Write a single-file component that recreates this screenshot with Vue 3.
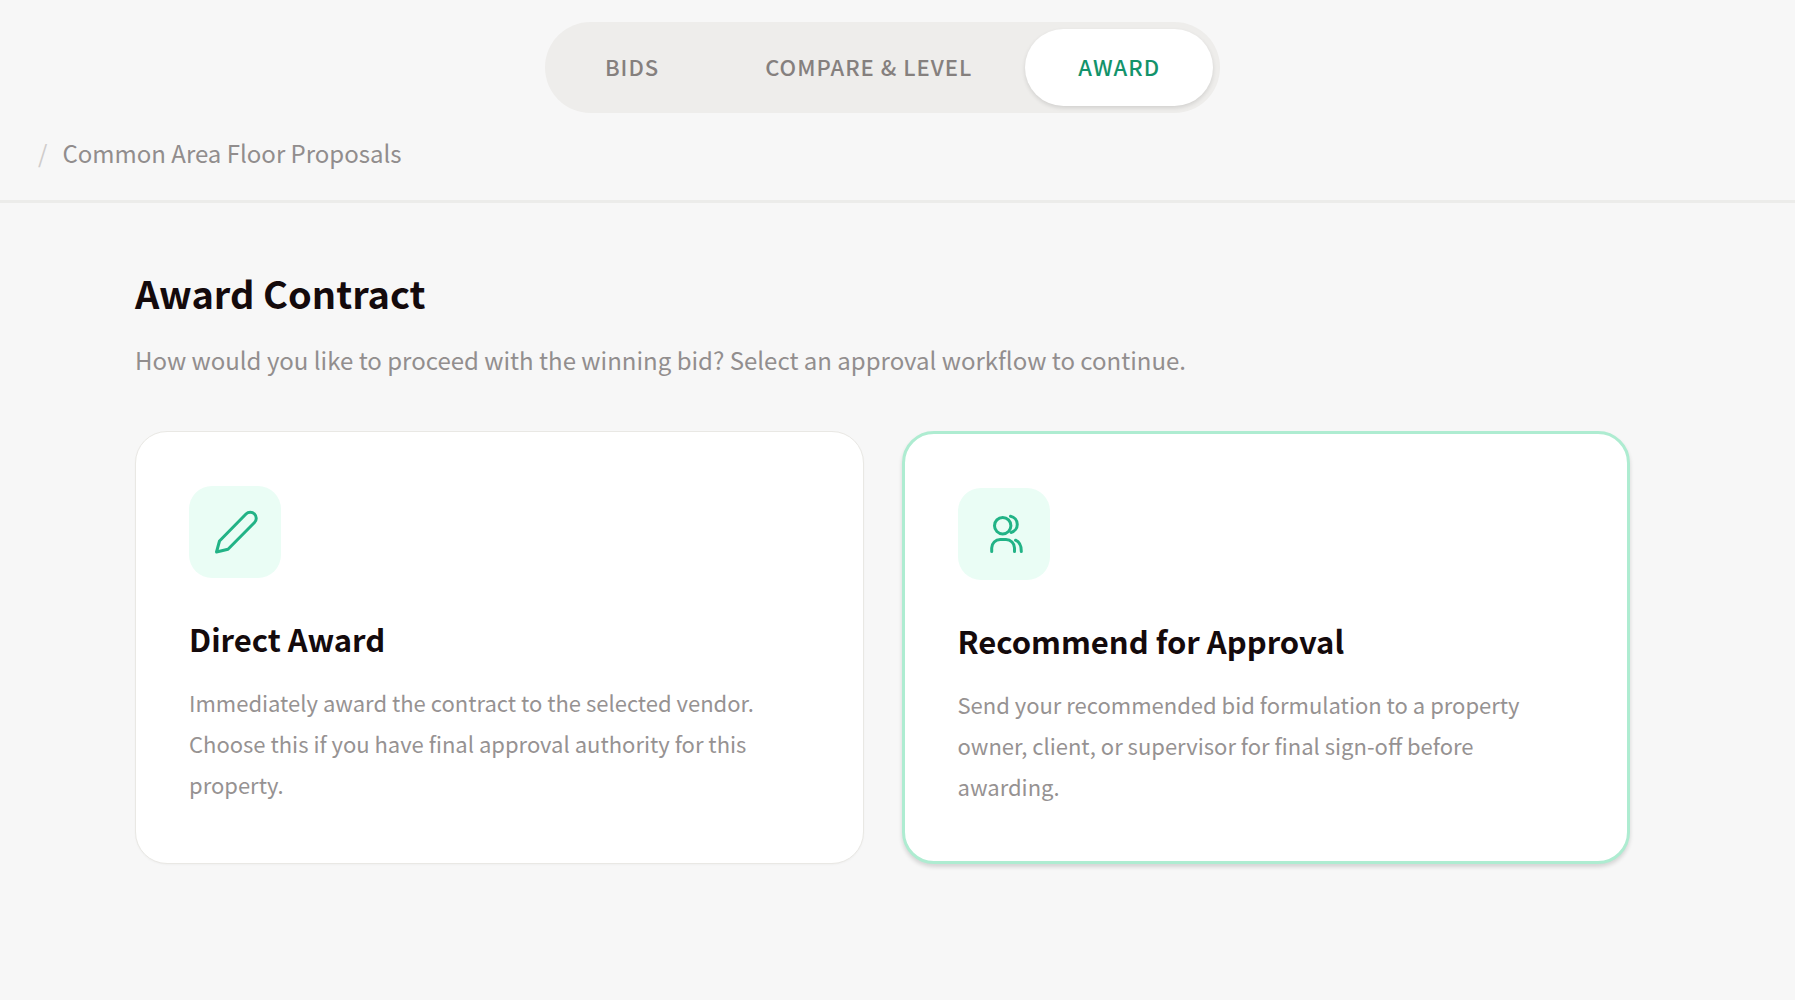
<script setup>
import { ref } from 'vue'

const tabs = ['Bids', 'Compare & Level', 'Award']
const activeTab = ref('Award')

const options = [
  {
    id: 'direct',
    title: 'Direct Award',
    text: 'Immediately award the contract to the selected vendor. Choose this if you have final approval authority for this property.',
  },
  {
    id: 'recommend',
    title: 'Recommend for Approval',
    text: 'Send your recommended bid formulation to a property owner, client, or supervisor for final sign-off before awarding.',
  },
]
const selected = ref('recommend')
</script>

<template>
  <div class="page">
    <header class="top">
      <nav class="tabs" aria-label="Bid stages">
        <button
          v-for="tab in tabs"
          :key="tab"
          type="button"
          class="tab"
          :class="{ active: tab === activeTab }"
          @click="activeTab = tab"
        >{{ tab }}</button>
      </nav>
      <div class="crumbs">
        <span class="slash">/</span>
        <span>Common Area Floor Proposals</span>
      </div>
    </header>

    <main class="content">
      <h1>Award Contract</h1>
      <p class="lead">How would you like to proceed with the winning bid? Select an approval workflow to continue.</p>
      <div class="cards">
        <button
          v-for="option in options"
          :key="option.id"
          type="button"
          class="card"
          :class="{ selected: option.id === selected }"
          :aria-pressed="option.id === selected"
          @click="selected = option.id"
        >
          <span class="badge">
            <svg v-if="option.id === 'direct'" viewBox="0 0 92 92" aria-hidden="true">
              <path d="M27.5 66L30.5 55L57 28A6 6 0 0 1 65.5 36.5L39 63.2Z" />
            </svg>
            <svg v-else viewBox="0 0 92 92" aria-hidden="true">
              <circle cx="44.7" cy="37.7" r="8.2" />
              <path d="M33.7 63.5V60A8.5 8.5 0 0 1 42.2 51.5H48A8.5 8.5 0 0 1 56.5 60V63.5" />
              <path d="M52.5 28.3A8.3 8.3 0 0 1 53 44.5" />
              <path d="M57.5 52.2Q63.3 54.5 63.3 63.5" />
            </svg>
          </span>
          <span class="title">{{ option.title }}</span>
          <span class="text">{{ option.text }}</span>
        </button>
      </div>
    </main>
  </div>
</template>

<style>
body {
  margin: 0;
  background: #f7f7f7;
}
</style>

<style scoped>
.page {
  min-height: 100vh;
  background: #f7f7f7;
  color: #140a0c;
  font-family: "Noto Sans CJK SC", "Noto Sans", sans-serif;
  font-size: 24px;
}

button {
  margin: 0;
  border: 0;
  font-family: inherit;
  cursor: pointer;
}

.top {
  padding: 22px 30px 0 0;
  border-bottom: 3px solid #ececea;
}

.tabs {
  display: flex;
  width: fit-content;
  margin: 0 auto;
  padding: 7px;
  border-radius: 46px;
  background: #eeedeb;
}

.tab {
  padding: 0 53px 2px;
  border-radius: 39px;
  background: transparent;
  color: #85807e;
  font-size: 22px;
  font-weight: 500;
  line-height: 75px;
  letter-spacing: 1px;
  text-transform: uppercase;
  white-space: nowrap;
}

.tab.active {
  background: #fff;
  color: #13936b;
  box-shadow: 0 2px 4px rgba(0, 0, 0, 0.12);
}

.crumbs {
  display: flex;
  gap: 15px;
  padding: 22px 38px 29px;
  color: #918d8d;
  line-height: 36px;
}

.slash {
  color: #cfcccb;
}

.content {
  padding: 62px 165px 64px 135px;
}

h1 {
  margin: 0;
  font-size: 38px;
  font-weight: 700;
  line-height: 56px;
}

.lead {
  margin: 21px 0 53px;
  color: #928e8e;
  line-height: 36px;
}

.cards {
  display: grid;
  grid-template-columns: 1fr 1fr;
  gap: 38px;
}

.card {
  display: flex;
  flex-direction: column;
  align-items: flex-start;
  padding: 54px 53px;
  border: 1px solid #e9e8e4;
  border-radius: 32px;
  background: #fff;
  color: inherit;
  text-align: left;
  box-shadow: 0 1px 2px rgba(0, 0, 0, 0.03);
}

.card.selected {
  border: 3px solid #aeecd1;
  box-shadow: 0 3px 4px rgba(0, 0, 0, 0.14);
}

.badge {
  width: 92px;
  height: 92px;
  border-radius: 23px;
  background: #eafdf5;
}

.badge svg {
  display: block;
  fill: none;
  stroke: #22b386;
  stroke-width: 3;
  stroke-linecap: round;
  stroke-linejoin: round;
}

.title {
  margin-top: 38px;
  font-size: 31px;
  font-weight: 700;
  line-height: 46px;
}

.text {
  margin-top: 20px;
  color: #969292;
  font-size: 22px;
  line-height: 41px;
}
</style>
